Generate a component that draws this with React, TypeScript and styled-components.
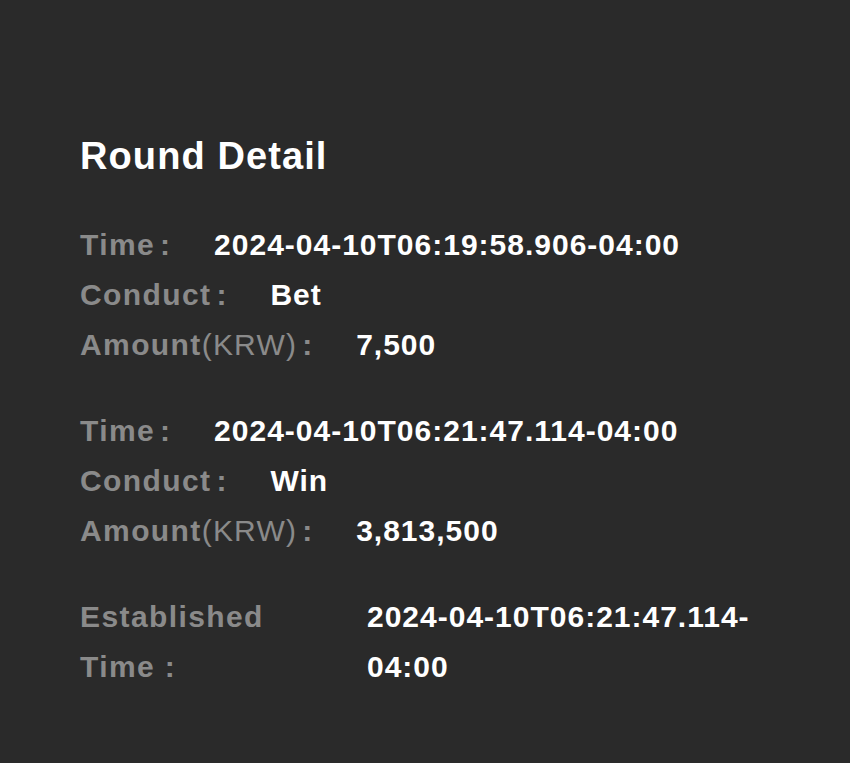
import React from "react";
import styled, { createGlobalStyle } from "styled-components";

const GlobalStyle = createGlobalStyle`
  html, body {
    margin: 0;
    padding: 0;
    background: #2a2a2a;
  }
  body {
    font-family: "Liberation Sans", Arial, Helvetica, sans-serif;
    -webkit-font-smoothing: antialiased;
  }
`;

const Page = styled.div`
  min-height: 763px;
  box-sizing: border-box;
  background: #2a2a2a;
  padding: 135px 80px 60px 80px;
  display: flex;
  flex-direction: column;
`;

const Title = styled.h1`
  margin: 0 0 42px 0;
  font-size: 38px;
  line-height: 43px;
  font-weight: 700;
  letter-spacing: 1.1px;
  color: #ffffff;
`;

const Groups = styled.div`
  display: flex;
  flex-direction: column;
  gap: 36px;
`;

const Group = styled.div`
  display: flex;
  flex-direction: column;
`;

const Row = styled.div`
  display: flex;
  align-items: baseline;
  font-size: 30px;
  line-height: 50px;
  white-space: nowrap;
`;

const Label = styled.span`
  color: #8a8a8a;
  font-weight: 700;
  letter-spacing: 1.4px;
`;

const Unit = styled.span`
  color: #8a8a8a;
  font-weight: 400;
  letter-spacing: 1.2px;
`;

const Colon = styled.span`
  color: #8a8a8a;
  font-weight: 700;
  margin: 0 44px 0 5px;
`;

const Value = styled.span`
  color: #ffffff;
  font-weight: 700;
  letter-spacing: 1px;
`;

const WrapRow = styled.div`
  display: grid;
  grid-template-columns: 210px 1fr;
  column-gap: 77px;
  font-size: 30px;
  line-height: 50px;
`;

const WrapLabel = styled.div`
  color: #8a8a8a;
  font-weight: 700;
  letter-spacing: 1.4px;
`;

const WrapValue = styled.div`
  color: #ffffff;
  font-weight: 700;
  letter-spacing: 1px;
`;

type Entry = { time: string; conduct: string; amount: string };

const entries: Entry[] = [
  { time: "2024-04-10T06:19:58.906-04:00", conduct: "Bet", amount: "7,500" },
  { time: "2024-04-10T06:21:47.114-04:00", conduct: "Win", amount: "3,813,500" },
];

export default function App() {
  return (
    <>
      <GlobalStyle />
      <Page>
        <Title>Round Detail</Title>
        <Groups>
          {entries.map((e) => (
            <Group key={e.time}>
              <Row>
                <Label>Time</Label>
                <Colon>:</Colon>
                <Value>{e.time}</Value>
              </Row>
              <Row>
                <Label>Conduct</Label>
                <Colon>:</Colon>
                <Value>{e.conduct}</Value>
              </Row>
              <Row>
                <Label>Amount</Label>
                <Unit>(KRW)</Unit>
                <Colon>:</Colon>
                <Value>{e.amount}</Value>
              </Row>
            </Group>
          ))}
          <WrapRow>
            <WrapLabel>Established Time :</WrapLabel>
            <WrapValue>
              2024-04-10T06:21:47.114-<wbr />04:00
            </WrapValue>
          </WrapRow>
        </Groups>
      </Page>
    </>
  );
}
